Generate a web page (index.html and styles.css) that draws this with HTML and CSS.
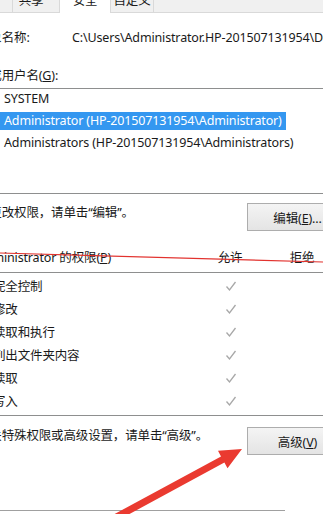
FILE: index.html
```html
<!DOCTYPE html>
<html lang="zh-CN">
<head>
  <meta charset="UTF-8" />
  <meta name="viewport" content="width=device-width, initial-scale=1.0" />
  <title>属性 - 安全</title>
  <link rel="stylesheet" href="styles.css">
</head>
<body>
  <div class="tabs">
    <div class="tab tab-first"></div>
    <div class="tab tab-share">共享</div>
    <div class="tab tab-active">安全</div>
    <div class="tab tab-custom">自定义</div>
  </div>

  <div class="panel">
    <div class="field">
      <span class="field-label">对象名称:</span>
      <span class="field-value">C:\Users\Administrator.HP-201507131954\Desktop</span>
    </div>

    <div class="group-label">组或用户名(<u>G</u>):</div>
    <ul class="user-list">
      <li><span>SYSTEM</span></li>
      <li class="selected"><span>Administrator (HP-201507131954\Administrator)</span></li>
      <li><span>Administrators (HP-201507131954\Administrators)</span></li>
    </ul>

    <div class="action-row">
      <span class="hint">要更改权限，请单击“编辑”。</span>
      <button type="button" class="btn">编辑(<u>E</u>)...</button>
    </div>

    <div class="perm-head">
      <span>Administrator 的权限(<u>P</u>)</span>
      <span class="col">允许</span>
      <span></span>
      <span class="col">拒绝</span>
    </div>
    <div class="perm-list">
      <div class="perm-row"><span class="perm-name">完全控制</span><span class="col"><svg class="check" viewBox="0 0 12 12"><polyline points="1.5,6.5 4.5,10 10.5,2" /></svg></span><span></span><span class="col"></span></div>
      <div class="perm-row"><span class="perm-name">修改</span><span class="col"><svg class="check" viewBox="0 0 12 12"><polyline points="1.5,6.5 4.5,10 10.5,2" /></svg></span><span></span><span class="col"></span></div>
      <div class="perm-row"><span class="perm-name">读取和执行</span><span class="col"><svg class="check" viewBox="0 0 12 12"><polyline points="1.5,6.5 4.5,10 10.5,2" /></svg></span><span></span><span class="col"></span></div>
      <div class="perm-row"><span class="perm-name">列出文件夹内容</span><span class="col"><svg class="check" viewBox="0 0 12 12"><polyline points="1.5,6.5 4.5,10 10.5,2" /></svg></span><span></span><span class="col"></span></div>
      <div class="perm-row"><span class="perm-name">读取</span><span class="col"><svg class="check" viewBox="0 0 12 12"><polyline points="1.5,6.5 4.5,10 10.5,2" /></svg></span><span></span><span class="col"></span></div>
      <div class="perm-row"><span class="perm-name">写入</span><span class="col"><svg class="check" viewBox="0 0 12 12"><polyline points="1.5,6.5 4.5,10 10.5,2" /></svg></span><span></span><span class="col"></span></div>
    </div>

    <div class="action-row adv-row">
      <span class="hint">有关特殊权限或高级设置，请单击“高级”。</span>
      <button type="button" class="btn">高级(<u>V</u>)</button>
    </div>

    <div class="footer-line"></div>
  </div>

  <!-- 标注：红线和箭头 -->
  <svg class="annotation" viewBox="0 0 323 514" width="323" height="514">
    <line x1="0" y1="253" x2="323" y2="262" stroke="#e2322e" stroke-width="1.2" />
    <polygon fill="#ea3a30" points="242,449 218,450.7 221,456.4 106.7,518.3 110.1,524.5 224.4,462.6 227.5,468.3" />
  </svg>
</body>
</html>
```

FILE: styles.css
```css
html, body {
  margin: 0;
  overflow: hidden;
  background: #fff;
}
body {
  width: 323px;
  height: 514px;
  font-family: "Noto Sans", "Noto Sans CJK SC", sans-serif;
  font-size: 12.5px;
  letter-spacing: -0.15px;
  color: #1a1a1a;
  white-space: nowrap;
}

/* 选项卡 */
.tabs {
  display: flex;
  align-items: flex-start;
  height: 18px;
  margin-top: -6px;
  background: #f0f0f0;
  border-bottom: 1px solid #d9d9d9;
}
.tab {
  box-sizing: border-box;
  height: 18px;
  line-height: 14px;
  text-align: center;
  border-right: 1px solid #d9d9d9;
  background: #f0f0f0;
}
.tab-first { width: 13px; }
.tab-share { width: 47px; padding-right: 10px; }
.tab-active {
  width: 51px;
  height: 19px;
  margin-bottom: -1px;
  background: #fff;
}
.tab-custom { width: 43px; }

/* 内容面板 */
.panel {
  width: 371px;
  margin-left: -23px;
}
.field {
  display: flex;
  margin-top: 15px;
  line-height: 20px;
}
.field-label {
  width: 95px;
  flex-shrink: 0;
}
.group-label {
  margin-top: 18px;
  line-height: 20px;
}

.user-list {
  list-style: none;
  margin: 2px 0 0;
  padding: 0;
  height: 104px;
  border: 1px solid #8e8f8f;
}
.user-list li {
  height: 22px;
  padding-left: 24px;
}
.user-list li span {
  display: inline-block;
  line-height: 18px;
  margin-top: 1px;
  padding: 0 4px 0 2px;
}
.user-list li.selected span {
  background: #3497f0;
  color: #fff;
  margin-left: -8px;
  padding-left: 10px;
}

.action-row {
  display: flex;
  justify-content: space-between;
  align-items: flex-start;
  margin-top: 9px;
}
.action-row .hint {
  line-height: 20px;
}
.adv-row {
  margin-top: 11px;
}
.adv-row .hint {
  line-height: 18px;
}
.btn {
  width: 101px;
  height: 28px;
  padding: 0;
  font: inherit;
  letter-spacing: inherit;
  color: #1a1a1a;
  border: 1px solid #adadad;
  background: linear-gradient(#f4f4f4, #e4e4e4);
}

/* 权限列表 */
.perm-head,
.perm-row {
  display: grid;
  grid-template-columns: 228px 50px 22px 50px;
}
.perm-head {
  margin-top: 17px;
  height: 24px;
  line-height: 20px;
}
.perm-list {
  border: 1px solid #8e8f8f;
  padding: 2px 0;
}
.perm-row {
  height: 23px;
  line-height: 23px;
}
.perm-name {
  padding-left: 15px;
}
.col {
  text-align: center;
}
.check {
  width: 12px;
  height: 12px;
  vertical-align: -1px;
  fill: none;
  stroke: #a8a8a8;
  stroke-width: 1.3;
}

.footer-line {
  width: 308px;
  margin-top: 55px;
  border-top: 1px solid #a0a0a0;
}

.annotation {
  position: absolute;
  top: 0;
  left: 0;
  pointer-events: none;
}
```
